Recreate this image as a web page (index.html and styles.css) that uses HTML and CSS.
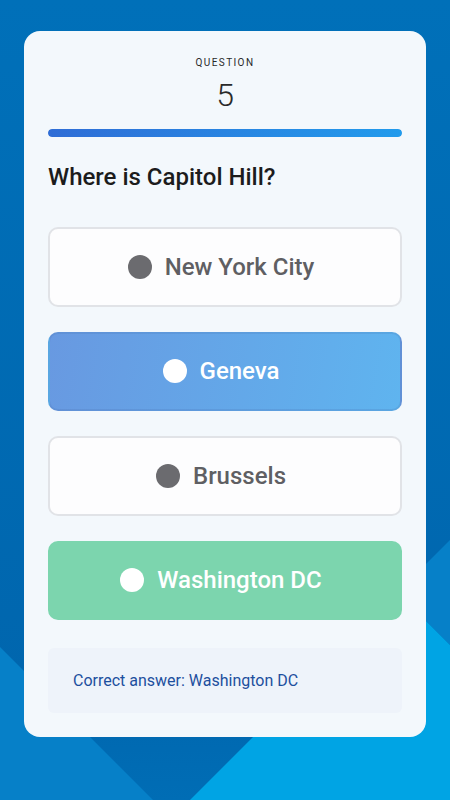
FILE: index.html
```html
<!DOCTYPE html>
<html lang="en">
<head>
  <meta charset="UTF-8">
  <meta name="viewport" content="width=device-width, initial-scale=1.0">
  <title>Quiz</title>
  <link rel="stylesheet" href="styles.css">
</head>
<body>
  <svg class="backdrop" viewBox="0 0 450 800" preserveAspectRatio="none" aria-hidden="true">
    <defs>
      <linearGradient id="deep" x1="0" y1="0" x2="0" y2="1">
        <stop offset="0" stop-color="#0070b9"/>
        <stop offset="0.85" stop-color="#0066ae"/>
        <stop offset="1" stop-color="#006db5"/>
      </linearGradient>
    </defs>
    <rect width="450" height="800" fill="url(#deep)"/>
    <polygon points="0,647 153,800 0,800" fill="#0680c8"/>
    <polygon points="450,540 450,645 397.5,592.5" fill="#0680c8"/>
    <polygon points="397.5,592.5 450,645 450,800 190,800" fill="#00a4e4"/>
  </svg>

  <main class="card">
    <div class="counter">
      <p class="counter-label">QUESTION</p>
      <p class="counter-num">5</p>
    </div>
    <div class="progress"><div class="progress-fill" style="width: 100%"></div></div>

    <h1 class="question">Where is Capitol Hill?</h1>

    <div class="options">
      <button class="option">
        <span class="dot"></span>New York City
      </button>
      <button class="option option-picked">
        <span class="dot"></span>Geneva
      </button>
      <button class="option">
        <span class="dot"></span>Brussels
      </button>
      <button class="option option-right">
        <span class="dot"></span>Washington DC
      </button>
    </div>

    <p class="feedback">Correct answer: Washington DC</p>
  </main>
</body>
</html>
```

FILE: styles.css
```css
html, body {
  margin: 0;
  height: 100%;
}
body {
  position: relative;
  font-family: Roboto, "Liberation Sans", sans-serif;
  padding: 31px 24px 0;
  box-sizing: border-box;
  overflow: hidden;
}
.backdrop {
  position: absolute;
  top: 0;
  left: 0;
  width: 100%;
  height: 100%;
  z-index: 0;
}
.card {
  position: relative;
  z-index: 1;
  height: 706px;
  box-sizing: border-box;
  padding: 24px 24px;
  background: #f3f8fc;
  border-radius: 16px;
  display: flex;
  flex-direction: column;
}
.counter {
  text-align: center;
  color: #2a2a2a;
}
.counter-label {
  margin: 1px 0 0;
  font-size: 10px;
  line-height: 14px;
  letter-spacing: 1.4px;
}
.counter-num {
  margin: 7px 0 0;
  font-size: 32px;
  line-height: 36px;
  font-weight: 300;
}
.progress {
  margin-top: 16px;
  height: 8px;
  border-radius: 4px;
  background: #d8e4f0;
  overflow: hidden;
}
.progress-fill {
  height: 100%;
  border-radius: 4px;
  background: linear-gradient(90deg, #2f6dd6, #219bec);
}
.question {
  margin: 26px 0 36px;
  font-size: 24px;
  line-height: 28px;
  font-weight: 500;
  color: #1c1c1c;
}
.options {
  display: flex;
  flex-direction: column;
  gap: 25px;
}
.option {
  display: flex;
  align-items: center;
  justify-content: center;
  gap: 13px;
  height: 79.5px;
  padding: 0 8px 0 0;
  border: 2px solid #e1e3e7;
  border-radius: 10px;
  background: #fdfdfe;
  font-family: inherit;
  font-size: 24px;
  font-weight: 500;
  color: #5f5f63;
}
.dot {
  width: 24px;
  height: 24px;
  border-radius: 50%;
  background: #6b6b6f;
}
.option-picked {
  border-color: rgba(60, 100, 160, 0.16);
  background: linear-gradient(100deg, #6899e1, #5fb4ef);
  color: #fff;
}
.option-right {
  border-color: #7cd5ae;
  background: #7cd5ae;
  color: #fff;
}
.option-picked .dot,
.option-right .dot {
  background: #fff;
}
.feedback {
  margin: auto 0 0;
  padding: 0 25px;
  height: 65px;
  display: flex;
  align-items: center;
  border-radius: 6px;
  background: #eef3fa;
  font-size: 16px;
  color: #1d4f9e;
}
```
